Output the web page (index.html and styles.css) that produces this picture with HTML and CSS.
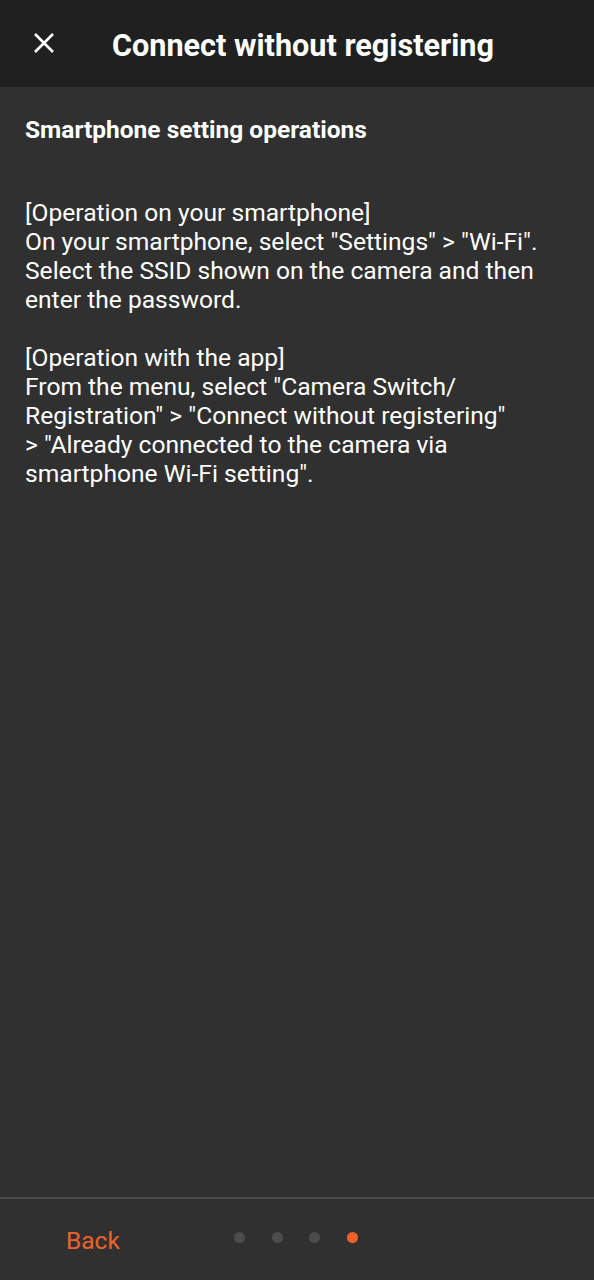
FILE: index.html
```html
<!DOCTYPE html>
<html lang="en">
<head>
    <meta charset="UTF-8">
    <meta name="viewport" content="width=device-width, initial-scale=1.0">
    <title>Connect without registering</title>
    <link rel="stylesheet" href="styles.css">
</head>
<body>
    <div id="app">
        <div class="header">
            <button class="close-btn" aria-label="Close">
                <svg width="22" height="22" viewBox="0 0 22 22">
                    <path d="M2 2 L20 20 M20 2 L2 20" stroke="#fff" stroke-width="2.6" fill="none"/>
                </svg>
            </button>
            <h1 class="title">Connect without registering</h1>
        </div>

        <div class="content">
            <h2 class="subtitle">Smartphone setting operations</h2>
            <p class="text">[Operation on your smartphone]<br>On your smartphone, select "Settings" &gt; "Wi-Fi".<br>Select the SSID shown on the camera and then<br>enter the password.</p>
            <p class="text">[Operation with the app]<br>From the menu, select "Camera Switch/<br>Registration" &gt; "Connect without registering"<br>&gt; "Already connected to the camera via<br>smartphone Wi-Fi setting".</p>
        </div>

        <div class="footer">
            <span class="back-link">Back</span>
            <div class="dots">
                <span class="dot"></span>
                <span class="dot"></span>
                <span class="dot"></span>
                <span class="dot active"></span>
            </div>
        </div>
    </div>
</body>
</html>
```

FILE: styles.css
```css
body {
    margin: 0;
    padding: 0;
    font-family: Roboto, "Liberation Sans", sans-serif;
    background-color: #303030;
    color: #ffffff;
}
#app {
    display: flex;
    flex-direction: column;
    height: 1280px;
}
.header {
    height: 87px;
    background-color: #202020;
    display: flex;
    align-items: center;
    flex-shrink: 0;
}
.close-btn {
    background: none;
    border: none;
    padding: 0;
    margin: 0 0 2px 33px;
    width: 22px;
    height: 22px;
    display: flex;
    cursor: pointer;
}
.title {
    margin: 0 0 0 57px;
    font-size: 30.6px;
    font-weight: 700;
    line-height: 36px;
    padding-top: 4px;
}
.content {
    flex: 1;
    padding: 0 25px;
}
.subtitle {
    margin: 28px 0 0;
    font-size: 24.5px;
    font-weight: 700;
    line-height: 30px;
}
.text {
    margin: 53px 0 0;
    font-size: 24.6px;
    line-height: 29px;
}
.text + .text {
    margin-top: 29px;
}
.footer {
    height: 81px;
    border-top: 2px solid #484848;
    display: flex;
    align-items: center;
    flex-shrink: 0;
}
.back-link {
    color: #f0602a;
    font-size: 24.5px;
    margin-left: 66px;
    padding-top: 2px;
}
.dots {
    display: flex;
    gap: 26.7px;
    margin-left: 114px;
    margin-bottom: 4px;
}
.dot {
    width: 11px;
    height: 11px;
    border-radius: 50%;
    background-color: #4c4c4c;
}
.dot.active {
    background-color: #f0602a;
}
```
